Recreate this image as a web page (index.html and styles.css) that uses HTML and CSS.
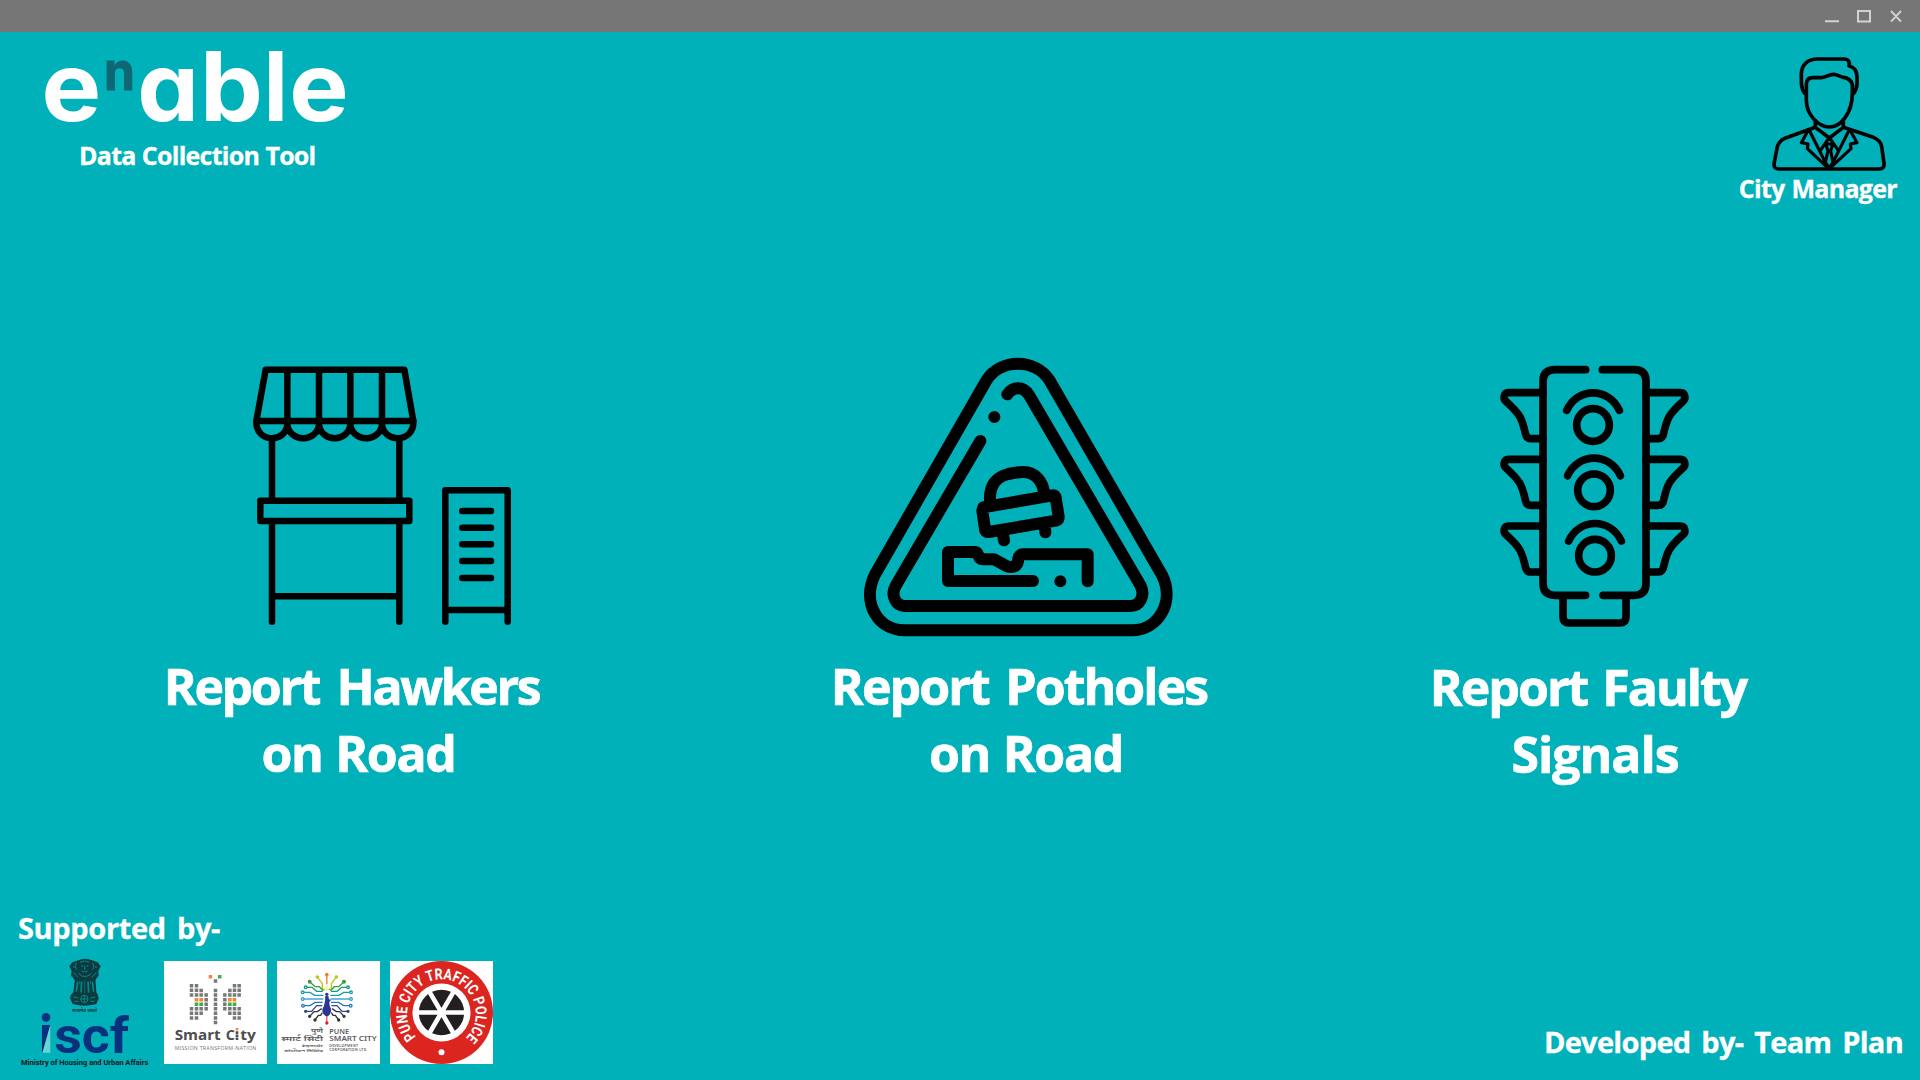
FILE: index.html
```
<!DOCTYPE html>
<html lang="en">
<head>
<meta charset="utf-8">
<title>Enable – Data Collection Tool</title>
<link rel="stylesheet" href="styles.css">
</head>
<body>
<div class="titlebar">
  <svg class="window-controls" viewBox="0 0 80 14" fill="none" stroke="#d2d2d2" stroke-width="2">
    <path d="M0 12.200h14M33 2h12v10.600H33zM66 2l10 10.600M76 2L66 12.600"/>
  </svg>
</div>

<header class="header">
  <div class="brand">
    <svg class="brand-logo" viewBox="40 45 310 85">
      <g class="logo-letter">
        <text transform="translate(71.300 121) scale(1.045 1)">e</text>
        <text transform="translate(168 121) scale(1.020 1)">a</text>
        <text transform="translate(231.500 121) scale(1.040 1)">b</text>
        <text transform="translate(275.700 121) scale(.940 1)">l</text>
        <text transform="translate(319 121) scale(1.040 1)">e</text>
        <text class="logo-n" transform="translate(119.500 89.500) scale(.920 1)">n</text>
      </g>
    </svg>
    <p class="tagline">Data Collection Tool</p>
  </div>
  <div class="profile">
    <svg class="avatar" viewBox="0 0 390 375" fill="none" stroke="#000" stroke-width="11" stroke-linejoin="round" stroke-linecap="round">
      <path d="M119 130C108 116 109 100 109 72C109 45 128 27 157 27H238C250 27 255 35 252 47C268 52 276 62 276 80V100C276 112 272 122 266 130"/>
      <path d="M124 105C124 90 132 83 144 83H168C182 83 190 73 206 73C218 73 224 80 236 82C250 84 261 94 262 104V130C262 195 223 231 193 231C161 231 124 195 124 150Z"/>
      <path d="M151 212V232L193 264L235 232V212M151 232L60 265C42 272 37 285 35 300L27 342C26 352 32 357 42 357H343C354 357 358 350 357 340L350 290C348 275 340 268 325 262L235 232"/>
      <path stroke-width="9.500" d="M130 240L109 278L129 282L127 296L190 355H194L258 296L256 282L276 278L255 240M134 243L190 355M251 243L195 355"/>
      <path stroke-width="9.500" d="M193 262L168 299M193 262L218 299M184 287L187 282H199L202 287L197 302L204 338L193 353L181 338L189 302Z"/>
    </svg>
    <p class="role">City Manager</p>
  </div>
</header>

<main class="reports">
  <section class="report">
    <svg class="icon icon-hawker" viewBox="0 0 870 870" fill="none" stroke="#000" stroke-width="19.500" stroke-linejoin="round" stroke-linecap="round">
      <path d="M49 213L77 59H493L520 213ZM142 59V213M237 59V213M331 59V213M426 59V213"/>
      <path d="M49 213C46 280 142 282 142 218C142 280 237 280 237 218C237 280 331 280 331 218C331 280 426 280 426 218C426 282 524 280 520 213"/>
      <path d="M96 266V452M478 266V452M61 452H508V513H61ZM96 513V815M478 513V815M96 739H478"/>
      <path d="M616 815V421H803V815M616 780H803M667 483H753M667 533H753M667 583H753M667 633H753M667 684H753"/>
    </svg>
    <h2 class="report-title title-hawkers">Report Hawkers<span class="line-two">on Road</span></h2>
  </section>
  <section class="report">
    <svg class="icon icon-pothole" viewBox="0 15 1020 870" fill="none" stroke="#000" stroke-width="36" stroke-linejoin="round" stroke-linecap="round">
      <path d="M410 105C452 40 555 40 598 105L936 690C976 770 925 856 846 856H164C85 856 34 775 74 690Z"/>
      <path d="M472 148C488 124 520 122 537 150L872 722C887 755 868 783 842 783H164C137 783 121 750 137 722L391 288"/>
      <path d="M420 465C418 420 440 395 475 387C500 382 508 381 520 381C560 381 578 415 582 440M400 487L608 451Q616 450 617 458L626 515Q627 525 618 527L417 561Q406 562 405 553L397 497ZM460 575L462 586M585 552L586 562"/>
      <path d="M549 708H294V621H375C390 621 380 643 398 643H432L465 661C485 671 502 665 504 648C505 635 508 628 520 628H713V709M433 216h.1M631 709h.1"/>
    </svg>
    <h2 class="report-title title-potholes">Report Potholes<span class="line-two">on Road</span></h2>
  </section>
  <section class="report report-signals">
    <svg class="icon icon-signal" viewBox="0 0 690 870" fill="none" stroke="#000" stroke-width="23" stroke-linejoin="round" stroke-linecap="round">
      <defs>
        <path id="hood" d="M189 128H85C72 128 68 146 78 154C122 194 125 205 135 245Q138 266 152 266H189"/>
        <g id="hoods"><use href="#hood"/><use href="#hood" y="200"/><use href="#hood" y="400"/></g>
        <g id="lamp"><circle cx="339" cy="225" r="49"/><path d="M260 181C292 111 386 111 418 181"/></g>
      </defs>
      <path d="M317 59H225Q189 59 189 95V700Q189 736 225 736H317M367 59H463Q498 59 498 95V700Q498 736 463 736H369M249 740V800Q249 819 268 819H419Q438 819 438 800V740"/>
      <use href="#hoods"/>
      <use href="#hoods" transform="translate(687 0) scale(-1 1)"/>
      <use href="#lamp"/><use href="#lamp" x="3" y="196"/><use href="#lamp" x="6" y="392"/>
    </svg>
    <h2 class="report-title title-signals">Report Faulty<span class="line-two signals-word">Signals</span></h2>
  </section>
</main>

<footer class="footer">
  <div class="supporters">
    <p class="supported">Supported by-</p>
    <div class="logos">
      <svg class="logo-iscf" viewBox="0 0 420 345">
        <g fill="#0b3b3e">
          <path d="M190 16Q210 6 231 16L248 22L257 34L250 48L251 62L240 76H180L168 62L170 48L163 34L172 22Z"/>
          <path d="M180 70H241L244 112L249 121H167L175 112Z"/>
          <path d="M168 119Q208 112 248 119L251 130L244 147Q208 158 173 147L165 130Z"/>
        </g>
        <g fill="none" stroke="#06878c" stroke-width="3">
          <path d="M184 24Q178 34 185 44M233 24Q240 34 233 44M195 22Q209 14 223 22M198 33h7M213 33h7M209 32V45M200 48Q209 54 218 48M190 55Q209 75 229 55M174 36h7M239 36h7M176 52Q182 62 188 66M244 52Q238 62 230 66"/>
          <path stroke-width="5" d="M188 80L184 110M200 80L198 113M219 80L221 113M232 80L236 110"/>
          <path d="M209 76V114M194 77V88M226 77V88" stroke-width="2"/>
          <circle cx="208" cy="132" r="11"/><path d="M208 122V142M198 132H218M176 128Q184 124 190 130M178 139H191M226 130Q233 124 241 128M226 139H239"/>
        </g>
        <text class="motto" x="171" y="170" textLength="75" lengthAdjust="spacingAndGlyphs">सत्यमेव जयते</text>
        <g class="iscf-word">
          <text x="118" y="293" textLength="224" lengthAdjust="spacingAndGlyphs">scf</text>
        </g>
        <circle cx="93" cy="187" r="13" fill="#08307c"/>
        <path d="M81 210H106L84 292H81Z" fill="#08307c"/>
        <path d="M106 210V293H82Z" fill="#67d4d6"/>
        <text class="ministry" x="18" y="330" textLength="382" lengthAdjust="spacingAndGlyphs">Ministry of Housing and Urban Affairs</text>
      </svg>
      <svg class="logo-card" viewBox="492 183 309 309">
        <g fill="none" stroke="#77787b" stroke-width="10.500">
          <path stroke-dasharray="10.500 3.250" d="M574.500 252v38M574.500 321v38M589.500 252v38M589.500 321v38M603.500 266v24M603.500 321v24M618.500 280v52M646.500 266v108M674.500 280v52M689.500 266v24M689.500 321v24M703.500 252v38M703.500 321v38M717.500 252v38M717.500 321v38M646.500 238v10"/>
          <path stroke="#f58634" d="M584 299h11M598 299h11M684 299h11M698 299h11M626 230h10.500"/>
          <path stroke="#3fae49" d="M584 313h11M598 313h11M684 313h11M698 313h11M654 230h10.500"/>
        </g>
        <text class="smart" x="524" y="419" textLength="138" lengthAdjust="spacingAndGlyphs">Smart</text>
        <text class="smart" x="677" y="419">C</text>
        <text class="smart" x="721" y="419" textLength="47" lengthAdjust="spacingAndGlyphs">ty</text>
        <path d="M711 394V420" stroke="#4d4d4f" stroke-width="8" stroke-dasharray="8 1.500"/>
        <path d="M707 384h8v7h-8z" fill="#f58634"/>
        <text class="mission" x="524" y="449" textLength="245">MISSION TRANSFORM-NATION</text>
      </svg>
      <svg class="logo-card" viewBox="51 63 309 309">
        <defs>
          <g id="rays" fill="none" stroke-width="4">
            <g stroke="#b9c81b" fill="#b9c81b"><path fill="none" d="M173 112L187 131V148H196"/><circle cx="172" cy="111" r="3.500"/></g>
            <g stroke="#3f9b3b" fill="#3f9b3b"><path fill="none" d="M149 125L165 140H178L190 152"/><circle cx="149" cy="125" r="4"/></g>
            <g stroke="#0f9b74"><path d="M141 142H156L170 154H188"/><circle cx="137" cy="142" r="4"/></g>
            <g stroke="#159fa8"><path d="M132 157H150L164 166H190"/><circle cx="128" cy="157" r="4"/></g>
            <g stroke="#2b9bd0"><path d="M132 177H190"/><circle cx="128" cy="177" r="4"/></g>
            <g stroke="#2c78b9"><path d="M133 197H150L165 187H188"/><circle cx="129" cy="197" r="4"/></g>
            <g stroke="#33488f" fill="#33488f"><path fill="none" d="M138 214H155L170 197H187"/><circle cx="137" cy="214" r="3"/></g>
            <g stroke="#333" fill="#333"><path fill="none" d="M149 229L162 215H172L185 206M165 240L175 226H182L187 218"/><circle cx="149" cy="229" r="3"/><circle cx="165" cy="240" r="3"/></g>
          </g>
        </defs>
        <use href="#rays"/><use href="#rays" transform="translate(401 0) scale(-1 1)"/>
        <path d="M200.500 104V133" stroke="#f07f2d" stroke-width="4"/><circle cx="200.500" cy="104" r="5.500" fill="#f07f2d"/>
        <path d="M200.500 136V152" stroke="#c9d63a" stroke-width="2"/>
        <path d="M200.500 230V249" stroke="#d8232a" stroke-width="3"/><circle cx="200.500" cy="249" r="5" fill="#d8232a"/>
        <circle cx="200.500" cy="163" r="5" fill="#2b3690"/>
        <path d="M196 168H205L207 178L213 180L208 186L209 197Q214 205 213 214Q211 226 201 230Q189 226 187 214Q187 205 192 197L195 184Z" fill="#2b3690"/>
        <g class="pune">
          <text x="153" y="279" font-size="20" textLength="36" lengthAdjust="spacingAndGlyphs">पुणे</text>
          <text x="64" y="304" font-size="20" textLength="125" lengthAdjust="spacingAndGlyphs">स्मार्ट सिटी</text>
          <text x="126" y="320" font-size="10" textLength="63" lengthAdjust="spacingAndGlyphs">डेव्हलपमेंट</text>
          <text x="73" y="335" font-size="10" textLength="116" lengthAdjust="spacingAndGlyphs">कॉर्पोरेशन लिमिटेड</text>
          <text x="208" y="282" font-size="22" textLength="59" lengthAdjust="spacingAndGlyphs">PUNE</text>
          <text x="208" y="304" font-size="22" textLength="142" lengthAdjust="spacingAndGlyphs">SMART CITY</text>
          <text x="208" y="320" font-size="10.500" textLength="86">DEVELOPMENT</text>
          <text x="208" y="333" font-size="10.500" textLength="114">CORPORATION LTD.</text>
        </g>
      </svg>
      <svg class="logo-card" viewBox="390 63 309 309">
        <defs><path id="ring" d="M468.500 290.500A103 103 0 1 1 620.500 290.500"/></defs>
        <circle cx="544.500" cy="217.500" r="154.500" fill="#dc251f"/>
        <circle cx="544.500" cy="217.500" r="87" fill="#fff"/>
        <circle cx="544.500" cy="217.500" r="68" fill="#231f20"/>
        <path d="M472 217.500H617M508 155L581 280M581 155L508 280" stroke="#fff" stroke-width="14"/>
        <circle cx="544.500" cy="337" r="9" fill="#fff"/>
        <text class="police"><textPath href="#ring" startOffset="0" textLength="480" lengthAdjust="spacingAndGlyphs">PUNE CITY TRAFFIC POLICE</textPath></text>
      </svg>
    </div>
  </div>
  <p class="developed">Developed by- Team Plan</p>
</footer>
</body>
</html>
```
FILE: styles.css
```
* { box-sizing: border-box; }
body {
  margin: 0;
  width: 1920px;
  height: 1080px;
  display: flex;
  flex-direction: column;
  overflow: hidden;
  background: #00b1ba;
  color: #fff;
  font-family: "Open Sans", "Noto Sans", sans-serif;
  font-weight: 700;
}
p, h2 { margin: 0; white-space: nowrap; -webkit-text-stroke: 0.3px #fff; }
svg { display: block; flex: none; }

.titlebar {
  height: 32px;
  flex: none;
  display: flex;
  justify-content: flex-end;
  align-items: flex-start;
  padding: 9px 15px 0 0;
  background: #767676;
}
.window-controls { width: 80px; height: 14px; }

.header {
  height: 318px;
  flex: none;
  display: flex;
  justify-content: space-between;
  align-items: flex-start;
  padding: 13px 23px 0 40px;
}
.brand-logo { width: 310px; height: 85px; overflow: visible; }
.logo-letter {
  font: 700 96px Inter, sans-serif;
  font-feature-settings: "cv11";
  fill: #fff;
  text-anchor: middle;
}
.logo-n { font-size: 54px; fill: #0f6773; stroke: #0f6773; stroke-width: 1px; }
.tagline {
  margin: 8px 0 0 39px;
  font-size: 25px;
  line-height: 34px;
  letter-spacing: -0.74px;
  word-spacing: 0.5px;
}
.profile { padding-top: 5px; display: flex; flex-direction: column; align-items: flex-end; }
.avatar { width: 130px; height: 125px; margin-right: 2px; }
.role { margin-top: -4px; font-size: 25px; line-height: 34px; letter-spacing: -0.7px; word-spacing: 1px; }

.reports {
  height: 560px;
  flex: none;
  display: grid;
  grid-template-columns: 706px 628px 510px;
}
.report { display: flex; flex-direction: column; align-items: center; }
.icon { height: 290px; }
.icon-hawker { width: 290px; margin-left: 64px; }
.icon-pothole { width: 340px; }
.icon-signal { width: 230px; margin-left: 12px; }
.report-title {
  margin-top: 13px;
  font-size: 50px;
  line-height: 67px;
  text-align: center;
  -webkit-text-stroke-width: 0.7px;
}
.report-signals .report-title { margin-top: 14px; }
.title-hawkers { padding-right: 3px; letter-spacing: -2.4px; word-spacing: 7px; }
.title-potholes { padding-right: 2px; letter-spacing: -1.95px; word-spacing: 5.5px; }
.title-signals { padding-right: 2px; letter-spacing: -2px; word-spacing: 4px; }
.line-two { display: block; padding-left: 14px; letter-spacing: -1.35px; word-spacing: 1px; }
.signals-word { letter-spacing: -1px; }

.footer {
  flex: 1;
  display: flex;
  justify-content: space-between;
  align-items: flex-start;
  padding: 0 17px 0 15px;
}
.supported {
  margin-top: -2px;
  padding-left: 3px;
  font-size: 29px;
  line-height: 40px;
  letter-spacing: -0.35px;
  word-spacing: 4px;
}
.logos { display: flex; align-items: flex-start; gap: 10px; margin-top: 7px; }
.logo-iscf { width: 140px; height: 115px; margin-right: -1px; }
.logo-card { width: 103px; height: 103px; margin-top: 6px; background: #fff; }
.developed {
  margin-top: 112px;
  font-size: 29px;
  line-height: 40px;
  letter-spacing: -0.7px;
  word-spacing: 4px;
}
.motto { font-size: 12px; fill: #0b3b3e; }
.iscf-word { font: 700 150px "Roboto", sans-serif; fill: #08307c; }
.ministry { font: 700 22px Roboto, sans-serif; fill: #06181c; }
.smart { font-size: 43px; fill: #4d4d4f; }
.mission { font-size: 16px; font-weight: 400; fill: #77787b; }
.pune { font-family: "Noto Sans", sans-serif; font-weight: 600; fill: #5c5c60; }
.police { font: 700 46px Roboto, sans-serif; fill: #fff; }
```
